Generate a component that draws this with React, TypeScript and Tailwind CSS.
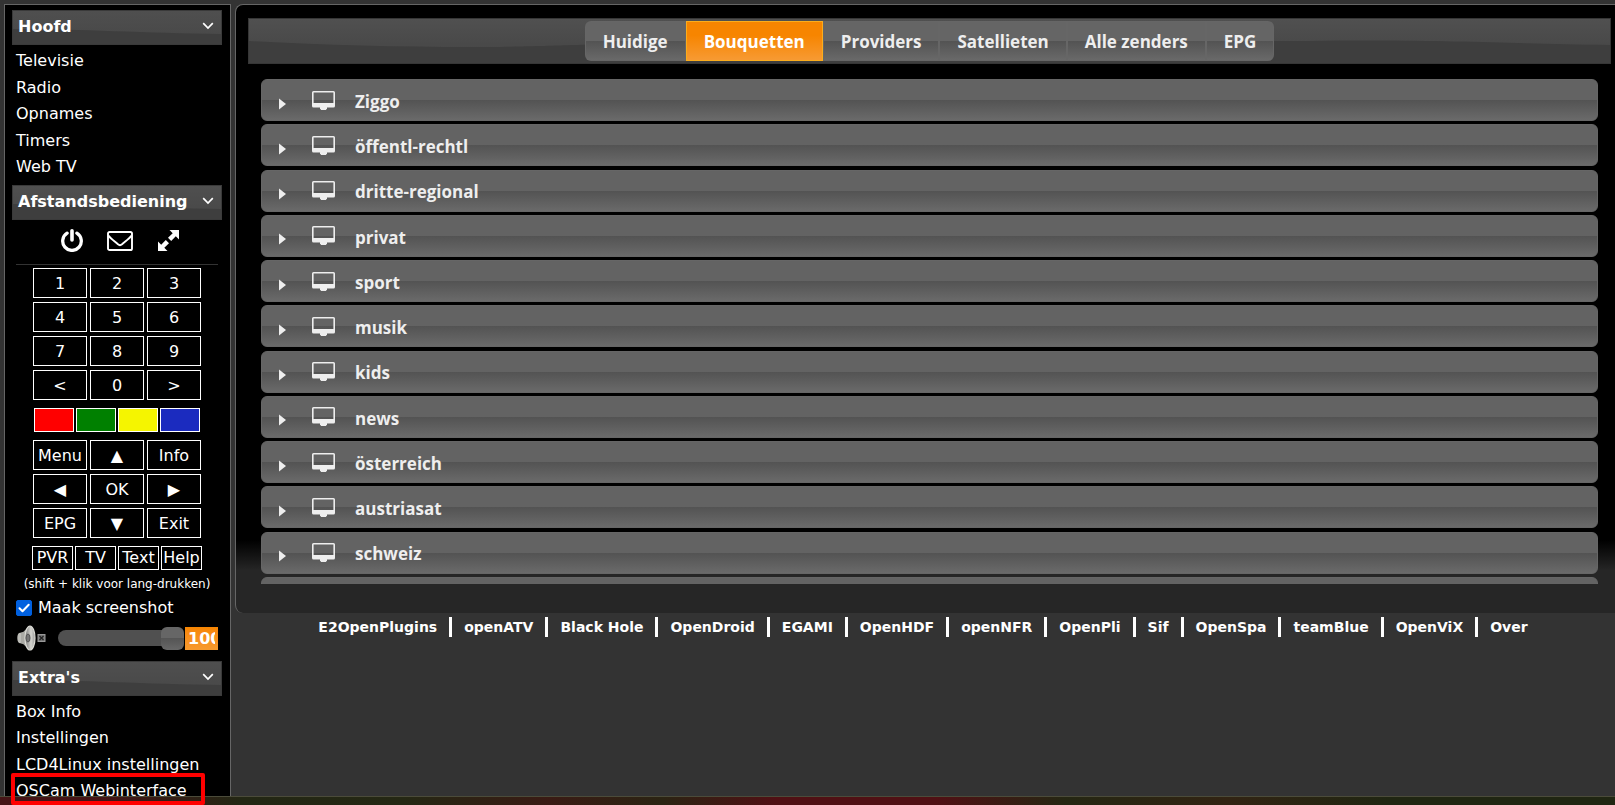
import { useState, type ReactNode } from 'react'

const mainLinks = ['Televisie', 'Radio', 'Opnames', 'Timers', 'Web TV']
const extraLinks = ['Box Info', 'Instellingen', 'LCD4Linux instellingen', 'OSCam Webinterface']
const numberKeys = ['1', '2', '3', '4', '5', '6', '7', '8', '9', '<', '0', '>']
const navKeys = ['Menu', '▲', 'Info', '◀', 'OK', '▶', 'EPG', '▼', 'Exit']
const modeKeys = ['PVR', 'TV', 'Text', 'Help']
const colorKeys = [
  { name: 'Rood', className: 'bg-[#ff0000]' },
  { name: 'Groen', className: 'bg-[#008000]' },
  { name: 'Geel', className: 'bg-[#f5f500]' },
  { name: 'Blauw', className: 'bg-[#1b2bbf]' },
]
const tabs = ['Huidige', 'Bouquetten', 'Providers', 'Satellieten', 'Alle zenders', 'EPG']
const bouquets = [
  'Ziggo',
  'öffentl-rechtl',
  'dritte-regional',
  'privat',
  'sport',
  'musik',
  'kids',
  'news',
  'österreich',
  'austriasat',
  'schweiz',
  '',
]
const footerLinks = [
  'E2OpenPlugins',
  'openATV',
  'Black Hole',
  'OpenDroid',
  'EGAMI',
  'OpenHDF',
  'openNFR',
  'OpenPli',
  'Sif',
  'OpenSpa',
  'teamBlue',
  'OpenViX',
  'Over',
]

function PanelHeader({ title }: { title: string }) {
  return (
    <h3 className="relative h-[35px] border border-[#3a3a3a] bg-gradient-to-b from-[#4f4f4f] to-[#474747] text-base font-bold">
      <svg className="absolute inset-0 h-full w-full" viewBox="0 0 208 33" preserveAspectRatio="none" aria-hidden="true">
        <path d="M0 18C70 18 130 22 208 23V33H0Z" fill="#3e3e3e" />
      </svg>
      <button type="button" className="relative flex h-full w-full items-center justify-between pr-[7px] pb-[2px] pl-[5px] text-left">
        {title}
        <svg className="mb-[2px]" width="12" height="8" viewBox="0 0 12 8" fill="none" aria-hidden="true">
          <path d="M1.2 1.2L6 6L10.8 1.2" stroke="#fff" strokeWidth="1.7" />
        </svg>
      </button>
    </h3>
  )
}

function LinkList({ links }: { links: string[] }) {
  return (
    <ul className="flex h-full flex-col justify-between px-1">
      {links.map((link) => (
        <li key={link} className="leading-[26px] whitespace-nowrap">
          <a href="#">{link}</a>
        </li>
      ))}
    </ul>
  )
}

function KeyGrid({ keys }: { keys: string[] }) {
  return (
    <div className="mx-auto grid w-[168px] grid-cols-3 gap-x-[3px] gap-y-1">
      {keys.map((key) => (
        <button key={key} type="button" className="flex h-[30px] items-center justify-center border border-white pt-px">
          {key}
        </button>
      ))}
    </div>
  )
}

function IconButton({ label, children }: { label: string; children: ReactNode }) {
  return (
    <button type="button" aria-label={label} className="flex h-6 w-[26px] items-center justify-center">
      {children}
    </button>
  )
}

function Sidebar() {
  const [volume, setVolume] = useState(100)

  return (
    <aside className="w-[227px] shrink-0 border border-[#666] bg-black pt-[5px] pr-2 pl-[7px]">
      <PanelHeader title="Hoofd" />
      <div className="h-[140px] pt-[3px] pb-[5px]">
        <LinkList links={mainLinks} />
      </div>

      <PanelHeader title="Afstandsbediening" />
      <div className="mx-1 flex gap-[22px] border-b border-[#333] pt-2 pb-3 pl-[43px]">
        <IconButton label="Power">
          <svg width="22" height="23" viewBox="0 0 22 23" fill="none" aria-hidden="true">
            <path d="M6.1 4.2A9.3 9.3 0 1 0 15.9 4.2" stroke="#fff" strokeWidth="3.3" strokeLinecap="round" />
            <path d="M11 1.8V11" stroke="#fff" strokeWidth="3.6" strokeLinecap="round" />
          </svg>
        </IconButton>
        <IconButton label="Bericht">
          <svg className="mt-[2px]" width="26" height="20" viewBox="0 0 26 20" fill="none" aria-hidden="true">
            <rect x="1" y="1" width="24" height="18" rx="1.6" stroke="#fff" strokeWidth="1.9" />
            <path d="M1.4 4.6C3.8 7.6 8.5 11 11 13.3Q13 15 15 13.3C17.5 11 22.2 7.6 24.6 4.6" stroke="#fff" strokeWidth="1.9" />
          </svg>
        </IconButton>
        <IconButton label="Vergroten">
          <svg width="23" height="23" viewBox="0 0 23 23" fill="#fff" aria-hidden="true">
            <path d="M12.5 1H22V10.5L18.8 7.3L14.2 12L11 8.8L15.7 4.2Z" />
            <path d="M10.5 22H1V12.5L4.2 15.7L8.8 11L12 14.2L7.3 18.8Z" />
          </svg>
        </IconButton>
      </div>

      <div className="pt-[3px]">
        <KeyGrid keys={numberKeys} />
        <div className="mx-auto my-2 grid w-[166px] grid-cols-4 gap-[2px]">
          {colorKeys.map((key) => (
            <button key={key.name} type="button" aria-label={key.name} className={`h-6 border border-white ${key.className}`} />
          ))}
        </div>
        <KeyGrid keys={navKeys} />
        <div className="mx-auto mt-2 grid w-[170px] grid-cols-4 gap-[2px]">
          {modeKeys.map((key) => (
            <button key={key} type="button" className="flex h-6 items-center justify-center border border-white">
              {key}
            </button>
          ))}
        </div>
      </div>
      <p className="pt-[6px] text-center text-xs leading-4 whitespace-nowrap">(shift + klik voor lang-drukken)</p>

      <label className="mx-1 mt-[6px] flex h-5 items-center gap-[6px]">
        <span className="relative h-4 w-4">
          <input
            type="checkbox"
            defaultChecked
            className="peer block h-4 w-4 appearance-none rounded-[2px] border border-[#767676] bg-white checked:border-[#0060df] checked:bg-[#0060df]"
          />
          <svg className="pointer-events-none absolute inset-0 hidden peer-checked:block" viewBox="0 0 16 16" fill="none" aria-hidden="true">
            <path d="M3.5 8.2L6.5 11.2L12.7 4.8" stroke="#fff" strokeWidth="2" strokeLinecap="round" strokeLinejoin="round" />
          </svg>
        </span>
        Maak screenshot
      </label>

      <div className="mx-1 mt-[6px] flex items-center">
        <svg width="30" height="28" viewBox="0 0 30 28" className="mr-3 shrink-0" aria-hidden="true">
          <defs>
            <linearGradient id="cone" x1="0" x2="1">
              <stop offset="0" stopColor="#777" />
              <stop offset="0.6" stopColor="#d5d5d0" />
              <stop offset="1" stopColor="#999" />
            </linearGradient>
          </defs>
          <path d="M3 9C1 10 .5 17 3 19L8 20V8Z" fill="#bdbdb8" />
          <path d="M5 9C8 8 10 5 13 2V26C10 23 8 20 5 19Z" fill="#aaaaa5" />
          <ellipse cx="14" cy="14" rx="5" ry="12" fill="url(#cone)" stroke="#dcdcd6" strokeWidth="1.2" />
          <ellipse cx="12" cy="14" rx="2" ry="4" fill="#777" stroke="#555" />
          <rect x="22" y="10.5" width="7" height="7" fill="#777" stroke="#999" />
          <path d="M23.5 12L27.5 16M27.5 12L23.5 16" stroke="#222" strokeWidth="1.3" />
        </svg>
        <input
          type="range"
          aria-label="Volume"
          value={volume}
          onChange={(event) => setVolume(Number(event.target.value))}
          className="h-4 min-w-0 flex-1 appearance-none rounded-lg bg-[#505050] [&::-webkit-slider-thumb]:h-[23px] [&::-webkit-slider-thumb]:w-[23px] [&::-webkit-slider-thumb]:appearance-none [&::-webkit-slider-thumb]:rounded-md [&::-webkit-slider-thumb]:bg-[linear-gradient(#666_50%,#555_50%,#686868)]"
        />
        <input
          type="text"
          aria-label="Volumeniveau"
          value={volume}
          readOnly
          className="ml-px h-[23px] w-[33px] bg-gradient-to-b from-[#f78500] to-[#f79a2e] px-[3px] pt-px text-base font-bold"
        />
      </div>

      <div className="pt-[9px]">
        <PanelHeader title="Extra's" />
        <div className="h-[108px] pt-[3px]">
          <LinkList links={extraLinks} />
        </div>
      </div>
    </aside>
  )
}

function TabBar() {
  const [active, setActive] = useState('Bouquetten')

  return (
    <div className="relative mr-1 ml-3 flex h-[46px] items-center justify-center border border-[#363636] bg-gradient-to-b from-[#505050] to-[#444]">
      <svg className="absolute inset-0 h-full w-full" viewBox="0 0 1363 44" preserveAspectRatio="none" aria-hidden="true">
        <path d="M0 22C70 26 150 28 220 28S300 26 420 24L1060 22C1200 20 1260 25 1363 26V44H0Z" fill="#3e3e3e" />
      </svg>
      <nav className="relative flex h-10 overflow-hidden rounded-md">
        {tabs.map((tab) => (
          <button
            key={tab}
            type="button"
            onClick={() => setActive(tab)}
            className={
              tab === active
                ? 'border border-[#fbad1c] bg-[linear-gradient(#f78500_35%,#f79a33)] px-[17px] pt-[2px] text-[17px] font-bold text-white'
                : 'border border-[#666] bg-[linear-gradient(#656565_50%,#535353_50%,#696969)] px-[17px] pt-[2px] text-[17px] font-bold text-[#eee]'
            }
          >
            {tab}
          </button>
        ))}
      </nav>
    </div>
  )
}

function BouquetRow({ name }: { name: string }) {
  return (
    <li>
      <button
        type="button"
        className="flex h-[42px] w-full items-center rounded-md border border-[#666] bg-[linear-gradient(#636363_50%,#535353_50%,#6a6a6a)] pt-[3px] pl-[17px] text-left text-[17px] font-bold text-[#eee]"
      >
        <svg className="mt-1" width="7" height="12" viewBox="0 0 7 12" fill="#eee" aria-hidden="true">
          <path d="M0 0.5L7 6L0 11.5Z" />
        </svg>
        <svg className="mr-5 mb-[3px] ml-[26px]" width="23" height="19" viewBox="0 0 23 19" aria-hidden="true">
          <path
            d="M1.5 0H21.5Q23 0 23 1.5V15Q23 16.5 21.5 16.5H15V18.3H14V19H9V18.3H8V16.5H1.5Q0 16.5 0 15V1.5Q0 0 1.5 0ZM1.6 1.6V12H21.4V1.6Z"
            fill="#eee"
            fillRule="evenodd"
          />
        </svg>
        {name}
      </button>
    </li>
  )
}

function Footer() {
  return (
    <footer className="flex items-center justify-center pt-[2px] pr-1 text-sm leading-6 font-bold whitespace-nowrap">
      {footerLinks.map((link, index) => (
        <span key={link} className="flex items-center">
          {index > 0 && <span className="mx-3 h-5 w-[3px] bg-white" />}
          <a href="#">{link}</a>
        </span>
      ))}
    </footer>
  )
}

export default function App() {
  return (
    <div className="relative h-screen overflow-hidden bg-[#333] font-['DejaVu_Sans',sans-serif] text-base text-white">
      <div className="flex gap-1 pt-1 pl-1">
        <Sidebar />
        <div className="min-w-0 flex-1">
          <main className="rounded-l-lg border-t border-l border-t-[#666] border-l-[#666] bg-[linear-gradient(#000_88%,#262626_93%)] pt-[13px] pb-[29px] font-['Open_Sans',sans-serif]">
            <TabBar />
            <div className="mt-[15px] mr-[17px] ml-[25px] h-[505px] overflow-hidden">
              <ul className="flex h-[540px] flex-col justify-between">
                {bouquets.map((name) => (
                  <BouquetRow key={name} name={name} />
                ))}
              </ul>
            </div>
          </main>
          <Footer />
        </div>
      </div>

      <div className="absolute inset-x-0 bottom-0 h-[9px] border-t border-[#4b4b3a] bg-[linear-gradient(90deg,#451416_0%,#451416_6%,#232714_15%,#252814_25%,#3a1b14_34%,#2b2413_41%,#501014_48%,#501014_58%,#252713_66%,#322413_76%,#202612_86%,#202612_100%)]" />
      <div className="absolute bottom-0 left-[11px] h-8 w-[194px] rounded-xs border-4 border-[#ff0000]" />
    </div>
  )
}
